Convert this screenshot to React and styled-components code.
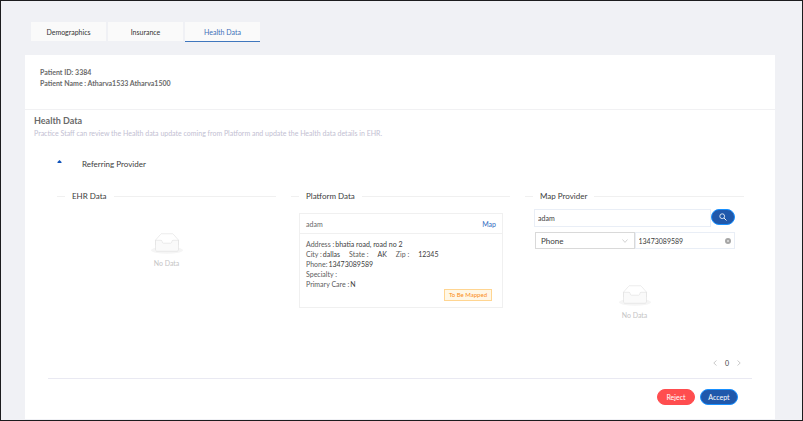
import React, { useState } from 'react';
import styled, { createGlobalStyle } from 'styled-components';

const ADDRESS_ROWS = [
  [{ label: 'Address :', value: 'bhatia road, road no 2' }],
  [
    { label: 'City :', value: 'dallas' },
    { label: 'State :', value: 'AK', wide: true },
    { label: 'Zip :', value: '12345', wide: true },
  ],
  [{ label: 'Phone:', value: '13473089589' }],
  [{ label: 'Specialty :', value: '' }],
  [{ label: 'Primary Care :', value: 'N' }],
];

const TABS = ['Demographics', 'Insurance', 'Health Data'];

const NoData = () => (
  <Empty>
    <svg width="32" height="21" viewBox="0 0 64 41" aria-hidden="true">
      <g transform="translate(0 1)" fill="none" fillRule="evenodd">
        <ellipse fill="#f5f5f5" cx="32" cy="33" rx="32" ry="7" />
        <g stroke="#d9d9d9">
          <path d="M55 12.76L44.854 1.258C44.367.474 43.656 0 42.907 0H21.093c-.749 0-1.46.474-1.947 1.257L9 12.761V22h46v-9.24z" />
          <path
            d="M41.613 15.931c0-1.605.994-2.93 2.227-2.931H55v18.137C55 33.26 53.68 35 52.05 35h-40.1C10.32 35 9 33.259 9 31.137V13h11.16c1.233 0 2.227 1.323 2.227 2.928v.022c0 1.605 1.005 2.901 2.237 2.901h14.752c1.232 0 2.237-1.308 2.237-2.913v-.007z"
            fill="#fafafa"
          />
        </g>
      </g>
    </svg>
    <span>No Data</span>
  </Empty>
);

const App = () => {
  const [activeTab, setActiveTab] = useState('Health Data');
  const [name, setName] = useState('adam');
  const [phone, setPhone] = useState('13473089589');

  return (
    <Page>
      <GlobalStyle />
      <Tabs>
        {TABS.map((tab) => (
          <Tab
            key={tab}
            type="button"
            $active={tab === activeTab}
            onClick={() => setActiveTab(tab)}
          >
            {tab}
          </Tab>
        ))}
      </Tabs>
      <Panel>
        <Patient>
          <p>Patient ID: 3384</p>
          <p>Patient Name : Atharva1533 Atharva1500</p>
        </Patient>
        <Intro>
          <h2>Health Data</h2>
          <p>
            Practice Staff can review the Health data update coming from Platform and update the
            Health data details in EHR.
          </p>
        </Intro>
        <SectionToggle type="button" aria-expanded="true">
          <svg width="5" height="8" viewBox="0 0 5 8" aria-hidden="true">
            <path d="M0.5 3V2L2.5 0l2 2v1z" fill="#0f52ba" />
          </svg>
          Referring Provider
        </SectionToggle>
        <Columns>
          <section>
            <Divider>EHR Data</Divider>
            <EmptySlot>
              <NoData />
            </EmptySlot>
          </section>
          <section>
            <Divider>Platform Data</Divider>
            <Card>
              <CardHead>
                <span>adam</span>
                <a href="#map">Map</a>
              </CardHead>
              <CardBody>
                {ADDRESS_ROWS.map((row) => (
                  <Row key={row[0].label}>
                    {row.map((item) => (
                      <Field key={item.label} $wide={item.wide}>
                        <span>{item.label}</span>
                        {item.value}
                      </Field>
                    ))}
                  </Row>
                ))}
                <Tag>To Be Mapped</Tag>
              </CardBody>
            </Card>
          </section>
          <section>
            <Divider>Map Provider</Divider>
            <SearchForm onSubmit={(e) => e.preventDefault()}>
              <SearchRow>
                <TextInput
                  aria-label="Provider name"
                  value={name}
                  onChange={(e) => setName(e.target.value)}
                />
                <PillButton type="submit" $search aria-label="Search">
                  <svg width="8" height="8" viewBox="0 0 8 8" aria-hidden="true">
                    <circle cx="3.2" cy="3.2" r="2.4" fill="none" stroke="#fff" strokeWidth="0.8" />
                    <path d="M5 5l2.5 2.5" stroke="#fff" strokeWidth="0.9" />
                  </svg>
                </PillButton>
              </SearchRow>
              <FilterRow>
                <SelectBox>
                  <select aria-label="Search by" defaultValue="Phone">
                    <option>Phone</option>
                    <option>NPI</option>
                  </select>
                  <svg width="6" height="4" viewBox="0 0 6 4" aria-hidden="true">
                    <path d="M0.5 0.5L3 3.4 5.5 0.5" fill="none" stroke="#bfbfbf" strokeWidth="0.7" />
                  </svg>
                </SelectBox>
                <PhoneBox>
                  <TextInput
                    aria-label="Phone"
                    value={phone}
                    onChange={(e) => setPhone(e.target.value)}
                  />
                  <button type="button" aria-label="Clear" onClick={() => setPhone('')}>
                    <svg width="6" height="6" viewBox="0 0 6 6" aria-hidden="true">
                      <circle cx="3" cy="3" r="3" fill="#a6a6a6" />
                      <path d="M2 2l2 2M4 2L2 4" stroke="#fff" strokeWidth="0.5" />
                    </svg>
                  </button>
                </PhoneBox>
              </FilterRow>
            </SearchForm>
            <EmptySlot $roomy>
              <NoData />
            </EmptySlot>
            <Pagination aria-label="Pages">
              <button type="button" aria-label="Previous page">
                <svg width="4" height="6" viewBox="0 0 4 6" aria-hidden="true">
                  <path d="M3.5 0.5L0.8 3l2.7 2.5" fill="none" stroke="#b5b5b5" strokeWidth="0.7" />
                </svg>
              </button>
              <span>0</span>
              <button type="button" aria-label="Next page">
                <svg width="4" height="6" viewBox="0 0 4 6" aria-hidden="true">
                  <path d="M0.5 0.5L3.2 3 0.5 5.5" fill="none" stroke="#b5b5b5" strokeWidth="0.7" />
                </svg>
              </button>
            </Pagination>
          </section>
        </Columns>
        <Actions>
          <PillButton type="button" $danger>
            Reject
          </PillButton>
          <PillButton type="button">Accept</PillButton>
        </Actions>
      </Panel>
    </Page>
  );
};

export default App;

const GlobalStyle = createGlobalStyle`
  * {
    box-sizing: border-box;
  }

  body {
    margin: 0;
    font-family: Lato, 'Open Sans', sans-serif;
    font-size: 7px;
    line-height: 10px;
    color: #3c3c3c;
  }

  h2, p {
    margin: 0;
  }

  button, input, select {
    font: inherit;
    color: inherit;
  }

  button {
    cursor: pointer;
  }
`;

const Page = styled.div`
  display: flex;
  flex-direction: column;
  min-height: 100vh;
  padding: 21px 27px 1px 24px;
  background-color: #f0f1f5;
  border: 1px solid #1c1c1e;
`;

const Tabs = styled.nav`
  display: flex;
  gap: 2px;
  margin-left: 6px;
`;

const Tab = styled.button`
  width: 75px;
  height: 20px;
  padding: 0;
  background-color: #fafafa;
  border: none;
  border-bottom: 1px solid ${({ $active }) => ($active ? '#3f76bd' : '#f0f1f5')};
  color: ${({ $active }) => ($active ? '#3d6fb8' : '#333333')};
`;

const Panel = styled.main`
  flex: 1;
  margin-top: 13px;
  background-color: #ffffff;
`;

const Patient = styled.div`
  height: 55px;
  padding: 12px 15px;
  border-bottom: 1px solid #f1f1f3;
  font-weight: 700;
  line-height: 11px;
  color: #6a6a6a;
`;

const Intro = styled.div`
  padding: 5px 9px;
  line-height: 12px;
  color: #c2c0d2;

  h2 {
    font-size: 9px;
    font-weight: 700;
    color: #6a6a6a;
  }
`;

const SectionToggle = styled.button`
  display: flex;
  align-items: center;
  gap: 20px;
  margin: 14px 0 0 32px;
  padding: 0;
  background: none;
  border: none;
  font-size: 8px;
  line-height: 12px;
`;

const Columns = styled.div`
  display: grid;
  grid-template-columns: repeat(3, 1fr);
  gap: 15px;
  margin: 20px 31px 0 32px;
`;

const Divider = styled.h3`
  display: flex;
  align-items: center;
  gap: 7px;
  margin: 0;
  font-size: 8px;
  font-weight: 400;
  line-height: 12px;
  white-space: nowrap;

  &::before,
  &::after {
    content: '';
    width: 8px;
    border-top: 1px solid #f0f0f0;
  }

  &::after {
    flex: 1;
  }
`;

const EmptySlot = styled.div`
  padding-top: ${({ $roomy }) => ($roomy ? '36px' : '31px')};
`;

const Empty = styled.div`
  display: flex;
  flex-direction: column;
  align-items: center;
  gap: 4px;
  color: #c4c4c4;
`;

const Card = styled.article`
  margin: 11px 7px 0 8px;
  border: 1px solid #f0f0f0;
`;

const CardHead = styled.header`
  display: flex;
  justify-content: space-between;
  padding: 5px 6px 4px;
  border-bottom: 1px solid #f0f0f0;
  color: #666666;

  a {
    color: #2f6bc0;
    text-decoration: none;
  }
`;

const CardBody = styled.div`
  display: flex;
  flex-direction: column;
  padding: 5px 10px 6px 6px;
`;

const Row = styled.div`
  display: flex;
  gap: 9px;
`;

const Field = styled.div`
  display: flex;
  gap: ${({ $wide }) => ($wide ? '9px' : '1px')};

  span {
    color: #5c5c5c;
  }
`;

const Tag = styled.span`
  align-self: flex-end;
  padding: 0 4px;
  background-color: #fff7e6;
  border: 1px solid #ffd591;
  font-size: 6px;
  color: #fa8c16;
`;

const SearchForm = styled.form`
  margin: 7px 9px 0;
`;

const SearchRow = styled.div`
  display: flex;
  align-items: flex-start;
`;

const TextInput = styled.input`
  flex: 1;
  min-width: 0;
  width: 100%;
  height: 18px;
  padding: 0 3px;
  background-color: #ffffff;
  border: 1px solid #e9eef6;
  outline: none;
`;

const PillButton = styled.button`
  display: flex;
  align-items: center;
  justify-content: center;
  width: ${({ $search }) => ($search ? '24px' : '38px')};
  height: 16px;
  padding: 0;
  background-color: ${({ $danger }) => ($danger ? '#ff4d4f' : '#2058ab')};
  border: 1px solid ${({ $danger }) => ($danger ? '#ff4d4f' : '#1890ff')};
  border-radius: 8px;
  color: #ffffff;
`;

const FilterRow = styled.div`
  display: grid;
  grid-template-columns: 1fr 1fr;
  margin-top: 5px;
`;

const SelectBox = styled.div`
  display: flex;
  align-items: center;
  height: 17px;
  margin-left: 1px;
  padding-right: 6px;
  border: 1px solid #d9d9d9;

  select {
    flex: 1;
    padding: 0 0 0 5px;
    appearance: none;
    background: none;
    border: none;
    outline: none;
    font-size: 8px;
  }
`;

const PhoneBox = styled.div`
  display: flex;
  align-items: center;
  height: 17px;
  padding-right: 3px;
  border: 1px solid #e9eef6;

  input {
    height: 15px;
    border: none;
  }

  button {
    display: flex;
    padding: 0;
    background: none;
    border: none;
  }
`;

const Pagination = styled.nav`
  display: flex;
  justify-content: flex-end;
  align-items: center;
  gap: 8px;
  margin: 38px 3px 0 0;

  button {
    display: flex;
    padding: 0;
    background: none;
    border: none;
  }
`;

const Actions = styled.footer`
  display: flex;
  justify-content: flex-end;
  gap: 5px;
  margin: 10px 23px 0;
  padding: 10px 14px 12px;
  border-top: 1px solid #e9e9f2;
`;
